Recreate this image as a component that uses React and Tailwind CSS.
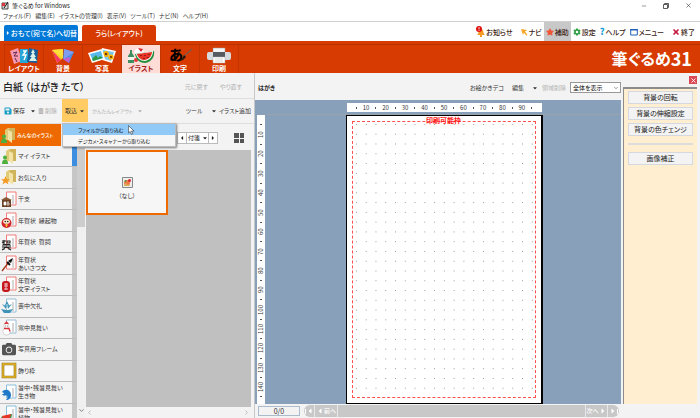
import { useState } from "react";
import { FaCamera, FaStar, FaSave, FaTrashAlt, FaCaretDown, FaCaretLeft, FaCaretRight } from "react-icons/fa";
import { FiMinus, FiX, FiChevronDown, FiChevronLeft, FiChevronRight } from "react-icons/fi";
import { IoSettingsSharp } from "react-icons/io5";

const MENUS = ["ファイル(F)", "編集(E)", "イラストの管理(I)", "表示(V)", "ツール(T)", "ナビ(N)", "ヘルプ(H)"];

const MODES = [
  { id: "layout", label: "レイアウト" },
  { id: "back", label: "背景" },
  { id: "photo", label: "写真" },
  { id: "illust", label: "イラスト" },
  { id: "text", label: "文字" },
  { id: "print", label: "印刷" },
];

const CATEGORIES = [
  { icon: "mine", label: "マイ イラスト" },
  { icon: "fav", label: "お気に入り" },
  { icon: "eto", label: "干支" },
  { icon: "daruma", label: "年賀状  縁起物" },
  { icon: "kanji", label: "年賀状  賀詞" },
  { icon: "brush", label: "年賀状\nあいさつ文" },
  { icon: "stamp", label: "年賀状\n文字イラスト" },
  { icon: "lotus", label: "喪中欠礼" },
  { icon: "snow", label: "寒中見舞い" },
  { icon: "camera", label: "写真用フレーム" },
  { icon: "frame", label: "飾り枠" },
  { icon: "wave", label: "暑中・残暑見舞い\n生き物" },
  { icon: "melon", label: "暑中・残暑見舞い\n植物" },
];

// one mark every 5mm, a number every 10mm
const marks = (count) => Array.from({ length: count }, (_, i) => (i % 2 ? String((i + 1) * 5) : ""));

function ModeIcon({ id }) {
  if (id === "layout")
    return (
      <svg viewBox="0 0 30 17" className="h-[17px] w-[30px]">
        <path d="M1 4 9 1l4 13-8 3z" fill="#f59bb0" />
        <path d="M4 6l4-1-3 4 4 0M6 11l2 4" stroke="#5b2450" fill="none" />
        <path d="M11 2l8 0v14h-8z" fill="#27a7d8" />
        <path d="M14 4h3l-3 4h3l-2 5" stroke="#fff" strokeWidth="1.4" fill="none" />
        <path d="M20 1l9 2-1 13-10-1z" fill="#16609c" />
        <path d="M24 2l2 4-4 0zM24 5l3 5-6 0zM24 8l4 6-8 0z" fill="#d9f3ea" />
      </svg>
    );
  if (id === "back")
    return (
      <svg viewBox="0 0 30 17" className="h-[17px] w-[30px]">
        <path d="M4 3l11-1v9l-6 5z" fill="#ffcf1f" />
        <path d="M4 3l5 13 4-3z" fill="#f2386b" />
        <path d="M4 3l11 8v-9z" fill="#ffdf3a" />
        <path d="M16 2l10 3-5 11-6-4z" fill="#4a8fe0" />
        <path d="M16 2l10 3-10 7z" fill="#7f9df0" />
        <path d="M15 12l6 4 1-6z" fill="#c95bd0" />
      </svg>
    );
  if (id === "photo")
    return (
      <svg viewBox="0 0 30 17" className="h-[17px] w-[30px]">
        <path d="M15 1l14 3-4 12-13-4z" fill="#fff" />
        <path d="M16 3l11 2-3 9-10-3z" fill="#7cc5ee" />
        <circle cx="19" cy="7" r="3" fill="#ffb400" />
        <circle cx="19" cy="7" r="1.3" fill="#6b3a10" />
        <circle cx="24" cy="10" r="2.6" fill="#ffb400" />
        <circle cx="24" cy="10" r="1.1" fill="#6b3a10" />
        <path d="M1 6l14-4 3 10-13 4z" fill="#fff" />
        <path d="M3 7l11-3 2 7-10 3z" fill="#5bb8ea" />
        <path d="M5 12l4-4 2 3 2-2 3 2-10 3z" fill="#2e9a44" />
      </svg>
    );
  if (id === "illust")
    return (
      <svg viewBox="0 0 30 17" className="h-[17px] w-[30px]">
        <path d="M4 3h2v3l2 3v7H2V9l2-3z" fill="#3d8f62" />
        <path d="M2 10h6v3H2z" fill="#f1f5ec" />
        <path d="M8 4l4-3 5 2 2 6-9 1z" fill="#fff" />
        <path d="M12 1l5 1-2 3z" fill="#d9242b" />
        <circle cx="10" cy="13" r="2" fill="#e8333a" />
        <path d="M9 7l19-3c1 5-2 11-9 12-6 0-9-4-10-9z" fill="#23903f" />
        <path d="M10 7l17-3c0 5-3 9-8 10-5 0-8-3-9-7z" fill="#fff" />
        <path d="M11 7l15-2c0 4-3 7-7 8-4 0-7-2-8-6z" fill="#e83426" />
        <path d="M15 8v1M19 8v1M23 7v1M18 11v1M22 10v1" stroke="#3a1010" />
      </svg>
    );
  if (id === "text")
    return (
      <span className="relative h-[17px] w-[30px] pl-1 text-left text-[14px] leading-[15px] font-black text-black">
        あ
        <svg viewBox="0 0 30 17" className="absolute inset-0 h-[17px] w-[30px]">
          <path d="M27 2 18 10" stroke="#7c5a4a" strokeWidth="1.4" />
          <path d="M19 8l2 2-3 3-2 1z" fill="#24140f" />
        </svg>
      </span>
    );
  return (
    <svg viewBox="0 0 30 17" className="h-[17px] w-[30px]">
      <path d="M9 1h12v5H9z" fill="#f4f4f4" stroke="#999" strokeWidth=".5" />
      <rect x="3" y="5" width="24" height="8" rx="2" fill="#d7dadd" />
      <path d="M9 5h12v5H9z" fill="#555b61" />
      <path d="M9 10h12v6H9z" fill="#fff" stroke="#aaa" strokeWidth=".5" />
      <path d="M11 12h8M11 14h8" stroke="#bbb" strokeWidth=".6" />
    </svg>
  );
}

function Card({ color, children }) {
  return (
    <svg viewBox="0 0 16 17" className="h-[17px] w-4 shrink-0">
      <path d="M5.5 1h9.5v13H5.5z" fill="#fff" stroke={color} strokeWidth=".9" />
      <path d="M11 4h2v9h-2z" fill="#d5d5d5" />
      {children}
    </svg>
  );
}

function Folder({ children }) {
  return (
    <svg viewBox="0 0 16 17" className="h-[17px] w-4 shrink-0">
      <path d="M5 3l3-2h2v12H5z" fill="#e2cb78" />
      <path d="M8 3l2-2h5v12H8z" fill="#cfb45c" />
      <path d="M8 3l4 2v11l-4-3z" fill="#f3e3a4" />
      {children}
    </svg>
  );
}

const person = (
  <>
    <circle cx="4" cy="9.5" r="2" fill="#4caf3e" />
    <path d="M1 16c0-3 1-4.5 3-4.5s3 1.5 3 4.5z" fill="#4caf3e" />
  </>
);

function CategoryIcon({ id }) {
  switch (id) {
    case "mine":
      return <Folder>{person}</Folder>;
    case "fav":
      return <Folder><path d="M4.500 7l1.300 3.200h3.200l-2.500 2 1 3.300-3-2-3 2 1-3.300-2.500-2h3.200z" fill="#f59a23" /></Folder>;
    case "eto":
      return (
        <Card color="#f07070">
          <path d="M1 9h9v7H1z" fill="#6b4226" />
          <path d="M0 9l5-3 6 3z" fill="#8a5a34" />
          <path d="M3 11h2v3H3zM6 11h2M7 11v4M6 13h3" fill="#fff" stroke="#fff" strokeWidth=".7" />
        </Card>
      );
    case "daruma":
      return (
        <Card color="#f07070">
          <circle cx="5.5" cy="11" r="5" fill="#d3222a" />
          <ellipse cx="5.5" cy="9.5" rx="3.4" ry="2.3" fill="#fbe7cf" />
          <circle cx="4.2" cy="9.5" r=".7" /><circle cx="6.8" cy="9.5" r=".7" />
          <path d="M4 13h3M5.5 12v3" stroke="#f3c545" />
        </Card>
      );
    case "kanji":
      return (
        <Card color="#f07070">
          <path d="M1 7h4M3 6v4M1 9l2-1M6 7h3v2H6zM2 10.5h7M2 10.5v4M9 10.5v4M3 12h5M3 13.5h5M1 16l3-1.5M10 16l-3-1.5" stroke="#222" strokeWidth="1.1" fill="none" />
        </Card>
      );
    case "brush":
      return (
        <Card color="#f07070">
          <path d="M1 16 8 7" stroke="#a33b1c" strokeWidth="1.4" />
          <path d="M7 6l3 2 2-5-2 1z" fill="#111" />
          <path d="M6 7l3 3" stroke="#111" strokeWidth="2" />
        </Card>
      );
    case "stamp":
      return (
        <Card color="#f07070">
          <rect x="1" y="5" width="8" height="11" rx="3" fill="#c5161d" />
          <path d="M3 8h4M3 10h4M5 7v7M3 13h4" stroke="#fff" strokeWidth=".7" />
        </Card>
      );
    case "lotus":
      return (
        <Card color="#8fb7d0">
          <path d="M6 3l2 4-2 3-2-3zM1 6l4 2 0 3zM11 6l-4 2 0 3zM0 11l5 1h2l5-1-3 4H3z" fill="#3f93b8" />
          <path d="M6 6v5" stroke="#bfe3f0" />
        </Card>
      );
    case "snow":
      return (
        <Card color="#8fb7d0">
          <circle cx="5.5" cy="12.5" r="3.7" fill="#fff" stroke="#bbb" strokeWidth=".6" />
          <circle cx="5.5" cy="7" r="2.6" fill="#fff" stroke="#bbb" strokeWidth=".6" />
          <path d="M3 5l2.5-3L8 5z" fill="#d9343a" />
          <path d="M3 9.5h5l1 3" stroke="#d9343a" strokeWidth="1.3" fill="none" />
          <path d="M4.5 7h.6M6.3 7h.6" stroke="#222" />
        </Card>
      );
    case "camera":
      return <FaCamera className="h-[14px] w-4 shrink-0 text-[#555]" />;
    case "frame":
      return (
        <svg viewBox="0 0 16 17" className="h-[17px] w-4 shrink-0">
          <path d="M2 2h12v13H2z" fill="#fff" stroke="#8d6b0c" strokeWidth="2.6" />
          <path d="M2 2h12v13H2z" fill="none" stroke="#e8b92a" strokeWidth="1.4" />
        </svg>
      );
    case "wave":
      return (
        <Card color="#7db8d8">
          <path d="M1 8c3-4 9-2 9 3 0 3-2 5-5 5 2-2 2-4 0-5-1 1-3 1-4-1 1 0 2 0 2-1z" fill="#1f78c8" />
        </Card>
      );
    default:
      return (
        <Card color="#7db8d8">
          <path d="M0 12l11-3c0 5-3 7-6 7s-4-1-5-4z" fill="#2e9a44" />
          <path d="M1 11l9-2c0 3-2 5-5 5s-3-1-4-3z" fill="#e83426" />
        </Card>
      );
  }
}

function UtilLink({ icon, label, active }) {
  return (
    <a href="#" className={`flex h-full items-center gap-[1px] px-[2px] text-[7px] font-medium whitespace-nowrap text-[#3a1a10] ${active ? "bg-[#c8c8c8]" : ""}`}>
      {icon}
      {label}
    </a>
  );
}

function SideButton({ children }) {
  return (
    <button type="button" className="h-[13px] w-full border border-[#d5d9df] bg-[#f3f3f3] text-[7px] leading-[11px] text-[#222]">
      {children}
    </button>
  );
}

export default function App() {
  const [mode, setMode] = useState("illust");
  const [category, setCategory] = useState("all");
  const [zoom, setZoom] = useState("全体を表示");

  return (
    <div
      lang="ja"
      className="flex h-screen flex-col overflow-hidden bg-[#f3f3f3] font-['Noto_Sans_CJK_JP',sans-serif] text-[6px] leading-[8px] text-[#333] [font-feature-settings:'palt']"
    >
      {/* TITLE BAR */}
      <header className="flex h-[11px] shrink-0 items-center bg-white">
        <svg viewBox="0 0 8 8" className="mx-[1px] h-2 w-2">
          <path d="M1 1h6v6H1z" fill="#ddd" stroke="#222" strokeWidth=".8" />
          <path d="M1 1h3v3H1z" fill="#d9343a" />
          <path d="M7 0 3 6" stroke="#111" />
        </svg>
        <h1 className="ml-[2px] text-[#222]">筆ぐるめ for Windows</h1>
        <div className="ml-auto flex items-center gap-4 pr-2 text-[#333]">
          <button type="button" aria-label="最小化"><FiMinus size={6} /></button>
          <button type="button" aria-label="元に戻す">
            <svg viewBox="0 0 6 6" className="h-[6px] w-[6px]" fill="none" stroke="currentColor" strokeWidth=".8">
              <path d="M.5 1.5h4v4h-4zM1.5 1.5v-1h4v4h-1" />
            </svg>
          </button>
          <button type="button" aria-label="閉じる"><FiX size={7} /></button>
        </div>
      </header>

      <nav className="flex h-[11px] shrink-0 items-center gap-1 border-b border-[#d0d0d0] bg-white pl-[3px]">
        {MENUS.map((m) => (
          <button key={m} type="button" className="whitespace-nowrap">{m}</button>
        ))}
      </nav>

      {/* TABS */}
      <div className="flex h-[19px] shrink-0 items-end bg-white pl-1">
        <button type="button" className="mr-1 flex h-4 w-[74px] items-center justify-center rounded-t-[2px] bg-[#0078d7] text-[7px] font-medium whitespace-nowrap text-white">
          <FaCaretRight size={6} />おもて(宛て名)へ切替
        </button>
        <button type="button" className="h-4 w-[74px] rounded-t-[2px] bg-[#d83b01] text-[7px] font-medium text-white">
          うら(レイアウト)
        </button>
        <div className="ml-auto flex h-full items-center pr-[3px]">
          <UtilLink
            label="お知らせ"
            icon={
              <svg viewBox="0 0 9 11" className="h-[11px] w-[9px]">
                <path d="M1 9c2-1 1-6 4-6s2 5 4 6zM4 9h2v2H4z" fill="#f59a23" />
                <circle cx="3" cy="3" r="3" fill="#e01010" />
                <path d="M3 1.2v2.2M3 4.2v.8" stroke="#fff" strokeWidth=".9" />
              </svg>
            }
          />
          <UtilLink
            label="ナビ"
            icon={
              <svg viewBox="0 0 8 8" className="ml-[3px] h-2 w-2">
                <path d="M1 1l6 1-2 1.5L7.500 7l-1 .7L4 4.700 3 7z" fill="#f5a623" />
              </svg>
            }
          />
          <UtilLink label="補助" active icon={<FaStar size={8} className="text-[#f0553a]" />} />
          <UtilLink label="設定" icon={<IoSettingsSharp size={8} className="text-[#2e9e44]" />} />
          <UtilLink label="ヘルプ" icon={<span className="text-[9px] font-black text-[#1a9fdc]">?</span>} />
          <UtilLink
            label="メニュー"
            icon={
              <svg viewBox="0 0 8 8" className="h-2 w-2">
                <path d="M.7 1.5h6.6v5.5H.7z" fill="none" stroke="#1c5fb8" />
                <path d="M.2 1h7.6v1.500H.2z" fill="#1c5fb8" />
              </svg>
            }
          />
          <UtilLink label="終了" icon={<FiX size={8} strokeWidth={5} className="ml-1 text-[#c4143c]" />} />
        </div>
      </div>

      {/* RIBBON */}
      <div className="flex h-8 shrink-0 items-end bg-[#d83b01] pl-1">
        <div className="flex h-[29px] flex-1 border-t border-[#b93300]">
          {MODES.map((m) => (
            <button
              key={m.id}
              type="button"
              onClick={() => setMode(m.id)}
              className={`flex w-[39px] flex-col items-center border-l border-[#c23400] pt-[2px] text-[7px] leading-[9px] font-bold ${
                mode === m.id ? "bg-[#ffdcd6] text-[#a3201c]" : "text-white"
              }`}
            >
              <ModeIcon id={m.id} />
              {m.label}
            </button>
          ))}
          <div className="flex flex-1 items-center justify-end border-l border-[#c23400] pr-2 pb-[3px] text-[16px] leading-none font-bold text-white">
            筆ぐるめ<span className="text-[18px] leading-none">31</span>
          </div>
        </div>
      </div>

      <div className="flex min-h-0 flex-1">
        {/* LEFT: illustration library */}
        <section className="flex w-[255px] shrink-0 flex-col border-r border-[#c8c8c8] pt-[2px]">
          <div className="flex h-6 shrink-0 items-center border-b border-[#ddd] pl-[3px]">
            <h2 className="text-[10px] font-medium text-[#222]">白紙 （はがき たて）</h2>
            <div className="ml-auto flex gap-3 pr-3 text-[#b0b0b0]">
              <button type="button" disabled>元に戻す</button>
              <button type="button" disabled>やり直す</button>
            </div>
          </div>

          <div className="flex h-[25px] shrink-0 items-center border-b border-[#ddd] pl-1 whitespace-nowrap">
            <button type="button" className="flex w-[34px] items-center gap-[1px]">
              <FaSave size={8} className="shrink-0 text-[#1aa0c8]" />保存<FaCaretDown size={6} className="ml-1 shrink-0" />
            </button>
            <button type="button" disabled className="flex w-6 items-center gap-[1px] text-[#b0b0b0]">
              <FaTrashAlt size={6} className="shrink-0" />削除
            </button>
            <div className="relative h-full">
              <button type="button" className="flex h-[23px] w-[26px] items-center justify-between bg-[#ffcb62] px-[3px]">
                取込<FaCaretDown size={6} />
              </button>
              <ul role="menu" className="absolute top-6 left-0 z-10 w-[114px] border border-[#bbb] bg-[#f6f6f6] text-[5px] shadow-[1px_1px_2px_rgba(0,0,0,0.5)]">
                <li><button type="button" role="menuitem" className="block h-[11px] w-full bg-[#91c9f7] pl-[15px] text-left text-[#111]">ファイルから取り込む</button></li>
                <li><button type="button" role="menuitem" className="block h-[11px] w-full pl-[15px] text-left text-[#111]">デジカメ・スキャナーから取り込む</button></li>
              </ul>
              <svg viewBox="0 0 8 11" className="absolute top-[26px] left-[66px] z-20 h-[10px] w-[7px]">
                <path d="M.5.5v8.5l2-1.800 1.500 3.300 1.500-.6L4 6.700h3z" fill="#fff" stroke="#333" strokeWidth=".7" />
              </svg>
            </div>
            <button type="button" disabled className="flex items-center gap-1 pl-1 text-[5px] text-[#b0b0b0]">
              かんたんレイアウト<FaCaretDown size={6} />
            </button>
            <button type="button" className="ml-auto flex items-center gap-2 pr-[2px]">ツール<FaCaretDown size={6} /></button>
            <button type="button" className="pr-[3px]">イラスト追加</button>
          </div>

          <div className="flex min-h-0 flex-1">
            <div className="flex w-[77px] shrink-0 flex-col overflow-hidden">
              <button
                type="button"
                onClick={() => setCategory("all")}
                className="flex h-[22px] w-[61px] shrink-0 items-center bg-[#ee6a00] text-[5px] font-medium whitespace-nowrap text-white"
              >
                <Folder>{person}</Folder>
                <span className="pl-[1px]">みんなのイラスト</span>
              </button>
              <ul className="grid h-[279px] shrink-0 auto-rows-fr">
                {CATEGORIES.map((c, i) => (
                  <li key={c.icon} className="flex border-b border-[#bdbdbd]">
                    <button
                      type="button"
                      onClick={() => setCategory(c.icon)}
                      className={`flex flex-1 items-center gap-[1px] overflow-hidden pl-[1px] text-left leading-[8px] whitespace-pre ${
                        category === c.icon ? "bg-[#ffe3c8]" : "bg-[#f3f3f3]"
                      }`}
                    >
                      <CategoryIcon id={c.icon} />
                      {c.label}
                    </button>
                    <span className={`w-[5px] ${i === 0 ? "bg-[#3d8ee0]" : "bg-[#c6c6c6]"}`} />
                  </li>
                ))}
              </ul>
            </div>

            <div className="flex w-2 shrink-0 flex-col items-center bg-[#f0f0f0] pt-6">
              <div className="h-[79px] w-full bg-[#cdcdcd]" />
              <FiChevronDown size={7} className="mt-auto mb-1" />
            </div>

            <div className="flex min-w-0 flex-1 flex-col pl-[1px]">
              <div className="flex h-[26px] shrink-0 items-center justify-end pt-[2px] pr-[10px]">
                <div className="mr-4 flex h-3 items-stretch border border-[#bbb] bg-white text-[#222]">
                  <button type="button" aria-label="前の分類" className="px-[1px]"><FaCaretLeft size={6} /></button>
                  <button type="button" className="flex items-center gap-[2px] border-x border-[#bbb] pl-[1px]">
                    付箋<FaCaretDown size={6} />
                  </button>
                  <button type="button" aria-label="次の分類" className="px-[1px]"><FaCaretRight size={6} /></button>
                </div>
                <button type="button" aria-label="一覧表示" className="grid h-[10px] w-[10px] grid-cols-2 gap-[1px]">
                  <i className="bg-[#555]" /><i className="bg-[#555]" /><i className="bg-[#555]" /><i className="bg-[#555]" />
                </button>
              </div>
              <div className="mr-[3px] flex-1 bg-[#c0c0c0]">
                <button type="button" className="flex h-[65px] w-[82px] flex-col items-center justify-center gap-1 border-2 border-[#ee6a00] bg-[#f6f6f6] pt-3">
                  <svg viewBox="0 0 11 11" className="h-[11px] w-[11px]">
                    <path d="M.5.5h10v10H.5z" fill="#eee" stroke="#888" />
                    <circle cx="5" cy="6" r="3" fill="#ef7a4a" />
                    <circle cx="7.5" cy="3.5" r="1.5" fill="#d9242b" />
                    <path d="M2 8l2-2 1 2 2-1 1 2H2z" fill="#d9b25a" />
                    <circle cx="3.5" cy="4" r="1" fill="#4a9a3a" />
                  </svg>
                  （なし）
                </button>
              </div>
              <div className="flex h-[11px] shrink-0 items-center justify-between pr-1 text-[#999]">
                <FiChevronLeft size={7} />
                <FiChevronRight size={7} />
              </div>
            </div>
          </div>
        </section>

        {/* CENTER: postcard */}
        <main className="flex min-w-0 flex-1 flex-col">
          <div className="flex h-[27px] shrink-0 items-center pt-[2px] pl-[3px]">
            <h3 className="font-bold text-[#222]">はがき</h3>
            <button type="button" className="ml-auto">お絵かきデコ</button>
            <button type="button" className="ml-2 flex items-center gap-2">編集<FaCaretDown size={6} /></button>
            <button type="button" disabled className="mx-1 text-[#b5b5b5]">領域削除</button>
            <label className="relative flex">
              <select
                aria-label="表示倍率"
                value={zoom}
                onChange={(e) => setZoom(e.target.value)}
                className="h-[11px] w-[51px] appearance-none border border-[#999] bg-white pl-[2px] text-[6px] leading-[9px] text-[#111]"
              >
                <option>全体を表示</option>
                <option>100%</option>
              </select>
              <FiChevronDown size={6} className="pointer-events-none absolute top-[3px] right-[2px]" />
            </label>
          </div>

          <div className="flex min-h-0 flex-1 gap-[2px] bg-[#88a0b9] pl-[2px]">
            <div className="mt-[15px] flex w-2 shrink-0 rotate-180 flex-col-reverse bg-white pt-[2px] pb-[5px] text-[#333]">
              {marks(29).map((n, i) => (
                <span key={i} className="flex min-h-0 flex-1 items-center justify-center leading-none whitespace-nowrap [writing-mode:vertical-rl]">
                  {n || <i className="h-[1px] w-[2px] bg-[#555]" />}
                </span>
              ))}
            </div>
            <div className="flex min-w-0 flex-1 flex-col items-center">
              <div className="mt-[3px] mb-[2px] flex h-[9px] w-[195px] shrink-0 bg-white px-[5px]">
                {marks(19).map((n, i) => (
                  <span key={i} className="flex min-w-0 flex-1 items-center justify-center leading-none">
                    {n || <i className="h-[2px] w-[1px] bg-[#555]" />}
                  </span>
                ))}
              </div>
              <div className="flex min-h-0 w-full flex-1 justify-center border-t border-[#9aa3ab]">
                <div className="relative w-[197px] border border-r-2 border-black bg-white p-[5px]">
                  <div className="h-full border border-dashed border-[#ff5050]">
                    <svg className="h-full w-full" shapeRendering="crispEdges">
                      <defs>
                        <pattern id="dots" width="9.77" height="9.77" patternUnits="userSpaceOnUse">
                          <path d="M3 2h1v1H3z" fill="#999" />
                        </pattern>
                      </defs>
                      <rect width="100%" height="100%" fill="url(#dots)" />
                    </svg>
                  </div>
                  <span className="absolute top-0 left-1/2 -translate-x-1/2 text-[7px] leading-[9px] font-bold whitespace-nowrap text-[#ff1010]">印刷可能枠</span>
                </div>
              </div>
            </div>
          </div>

          <footer className="flex h-[14px] shrink-0 items-center gap-1 pl-[3px]">
            <output className="h-[10px] w-[42px] border border-[#a9bbcc] text-center text-[7px]">0/0</output>
            <div className="mr-[2px] flex h-3 flex-1 items-stretch rounded-full bg-[#c8c8c8] text-white">
              <button type="button" disabled aria-label="最初へ" className="flex w-[11px] items-center justify-center border-r border-[#e8e8e8]">
                <i className="h-[5px] w-[1px] bg-white" /><FaCaretLeft size={8} />
              </button>
              <button type="button" disabled className="flex w-[23px] items-center justify-center border-r border-[#e8e8e8] font-medium"><FaCaretLeft size={8} />前へ</button>
              <span className="flex-1" />
              <button type="button" disabled className="flex w-[23px] items-center justify-center border-x border-[#e8e8e8] font-medium">次へ<FaCaretRight size={8} /></button>
              <button type="button" disabled aria-label="最後へ" className="flex w-[11px] items-center justify-center">
                <FaCaretRight size={8} /><i className="h-[5px] w-[1px] bg-white" />
              </button>
            </div>
          </footer>
        </main>

        {/* RIGHT: helper panel */}
        <aside className="flex w-[79px] shrink-0 flex-col pt-[3px] pr-[3px] pb-[14px] pl-[2px]">
          <button type="button" aria-label="補助を閉じる" className="mb-[3px] flex h-2 w-2 items-center justify-center self-end bg-[#d94a54] text-white">
            <FiX size={7} strokeWidth={3} />
          </button>
          <div className="flex flex-1 flex-col gap-[3px] border-t-2 border-l border-[#8c8c8c] bg-[#ffeed0] px-1 pt-[2px]">
            <SideButton>背景の回転</SideButton>
            <SideButton>背景の伸縮設定</SideButton>
            <SideButton>背景の色チェンジ</SideButton>
            <hr className="my-1 border-t-2 border-[#dcdcdc]" />
            <SideButton>画像補正</SideButton>
          </div>
        </aside>
      </div>
    </div>
  );
}
